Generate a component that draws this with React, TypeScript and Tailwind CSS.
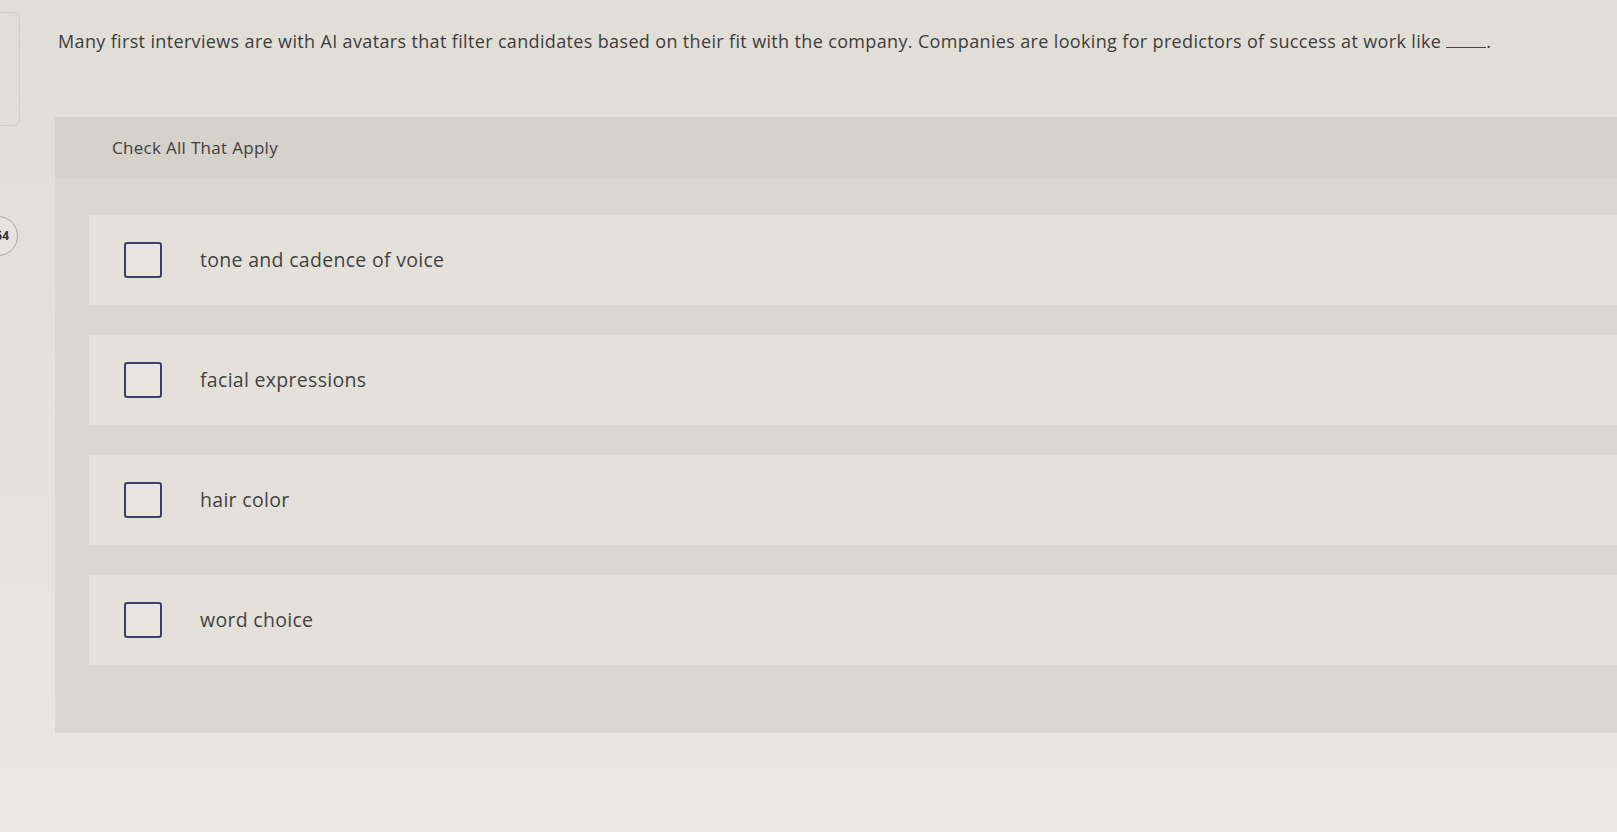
import React from 'react';

const options = [
  'tone and cadence of voice',
  'facial expressions',
  'hair color',
  'word choice',
];

export default function App() {
  return (
    <div
      className="relative min-h-[832px] w-full overflow-hidden bg-linear-to-b from-[#e1ded7] via-[#e4e1da] to-[#ebe8e2] text-[#3d3d3d]"
      style={{ fontFamily: '"Open Sans", Lato, Arial, sans-serif' }}
    >
      {/* left sidebar remnants */}
      <div className="absolute left-[-10px] top-[12px] h-[114px] w-[30px] rounded-md border border-[#d2cfc8] bg-[#e1ded7]" />
      <div className="absolute left-[-22px] top-[216px] flex h-[40px] w-[40px] items-center justify-end rounded-full border border-[#a9a6a0] bg-[#e6e3dc] pr-[8px] text-[12px] font-bold text-[#333]">
        54
      </div>

      <div className="pl-[58px] pr-[30px] pt-[29px]">
        <p className="text-[18px] leading-[24px] tracking-[0.35px]">
          Many first interviews are with AI avatars that filter candidates based on their fit with the company. Companies are looking for predictors of success at work like{' '}
          <span className="inline-block w-[40px] border-b border-[#444] align-baseline" />.
        </p>
      </div>

      <div className="ml-[55px] mt-[64px] bg-[#dad7d0] pb-[68px]">
        <div className="flex h-[62px] items-center bg-[#d5d2cb] pl-[57px] text-[17px] tracking-[0.3px] text-[#3f3f3f]">
          Check All That Apply
        </div>
        <div className="flex flex-col gap-[30px] pl-[34px] pt-[36px]">
          {options.map((opt) => (
            <label key={opt} className="flex h-[90px] items-center bg-[#e4e1da]">
              <span className="ml-[35px] h-[36px] w-[38px] rounded-[3px] border-2 border-[#3c3f6e] bg-[#e7e4dd]" />
              <span className="ml-[38px] text-[19.5px] tracking-[0.3px] text-[#424242]">{opt}</span>
            </label>
          ))}
        </div>
      </div>
    </div>
  );
}
